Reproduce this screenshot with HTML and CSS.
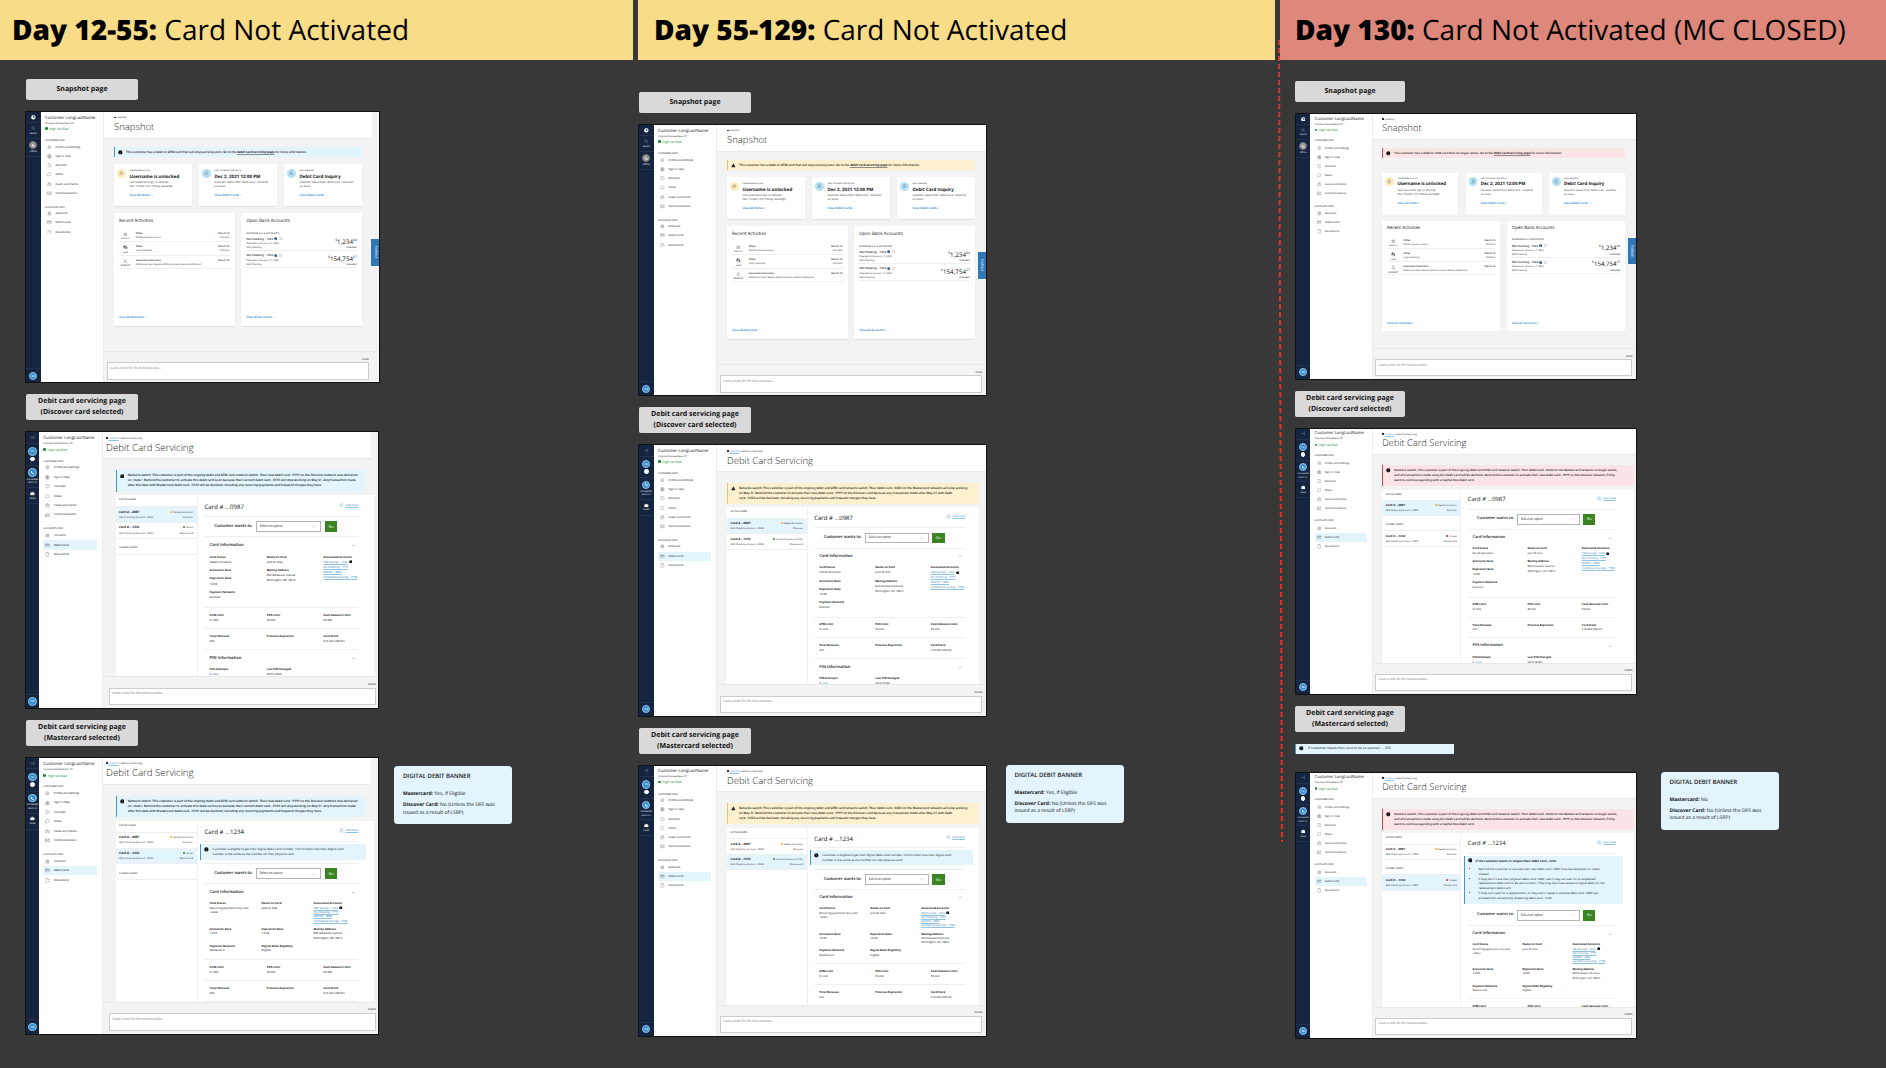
FILE: index.html
```html
<!DOCTYPE html>
<html lang="en">
<head>
    <meta charset="UTF-8">
    <meta name="viewport" content="width=device-width, initial-scale=1.0">
    <title>Card Not Activated</title>
    <link rel="stylesheet" href="styles.css">
</head>
<body>

    <!-- Icons shared by all the screens -->
    <svg class="sprite" aria-hidden="true">
        <symbol id="logo" viewBox="0 0 20 20"><circle cx="10" cy="10" r="9" fill="#fff"/><path d="M10 4l6 3-3 7-3-4-4-1z" fill="#15243f"/></symbol>
        <symbol id="search" viewBox="0 0 20 20"><circle cx="8" cy="8" r="5"/><path d="M12 12l6 6"/></symbol>
        <symbol id="collapse" viewBox="0 0 20 20"><path d="M2 10h9M8 7l3 3-3 3M13 4h4v12h-4"/></symbol>
        <symbol id="phone" viewBox="0 0 20 20"><path d="M6 4l3 3-1 2 3 3 2-1 3 3-2 2C9 16 4 11 4 6z" fill="#fff" stroke="none"/></symbol>
        <symbol id="case" viewBox="0 0 20 20"><path d="M2 7h16v10H2zM7 7V4h6v3" fill="#fff"/></symbol>
        <symbol id="gear" viewBox="0 0 20 20"><path d="M10 2l6 3v9l-6 4-6-4V5z"/><circle cx="10" cy="10" r="3"/></symbol>
        <symbol id="globe" viewBox="0 0 20 20"><circle cx="10" cy="10" r="8"/><path d="M2 10h16M10 2v16M4 6h12M4 14h12"/></symbol>
        <symbol id="clock" viewBox="0 0 20 20"><path d="M4 4a8 8 0 1 1-2 6M4 1v4h4M8 7l3 3v4"/></symbol>
        <symbol id="chat" viewBox="0 0 20 20"><path d="M3 17V9a7 7 0 1 1 7 7H7z"/></symbol>
        <symbol id="bag" viewBox="0 0 20 20"><path d="M3 6h14v11H3zM7 6V3h6v3M7 9v5M13 9v5"/></symbol>
        <symbol id="mail" viewBox="0 0 20 20"><path d="M2 4h16v12H2zM2 4l8 7 8-7M2 16l6-6M18 16l-6-6"/></symbol>
        <symbol id="bank" viewBox="0 0 20 20"><path d="M3 7l7-4 7 4zM5 8v8M8 8v8M12 8v8M15 8v8M2 17h16"/></symbol>
        <symbol id="card" viewBox="0 0 20 20"><path d="M2 4h16v12H2zM2 7h16M2 8h16"/></symbol>
        <symbol id="doc" viewBox="0 0 20 20"><path d="M4 2h8l4 4v12H4zM12 2v4h4"/></symbol>
        <symbol id="web" viewBox="0 0 20 20"><circle cx="10" cy="10" r="8"/><path d="M4 5l5-2 2 4-4 4-4-1zM12 9l5 1-2 6-4-2z" fill="#444"/></symbol>
        <symbol id="person" viewBox="0 0 20 20"><circle cx="10" cy="6" r="4"/><path d="M3 18c0-9 14-9 14 0z"/></symbol>
        <symbol id="lock" viewBox="0 0 20 20"><path d="M4 9h12v9H4zM6 9V6a4 4 0 0 1 8 0v3M10 12v3"/></symbol>
        <symbol id="info" viewBox="0 0 20 20"><circle cx="10" cy="10" r="9" fill="#111" stroke="none"/><path d="M10 9v6M10 5v2" stroke="#fff" stroke-width="1"/></symbol>
        <symbol id="warning" viewBox="0 0 20 20"><path d="M10 1l9 17H1z" fill="#111" stroke="none"/><path d="M10 7v5M10 14v2" stroke="#fff" stroke-width="1"/></symbol>
        <symbol id="minus" viewBox="0 0 20 20"><path d="M3 10h14"/></symbol>
    </svg>

    <main class="board">
        <section class="phase phase-early">
            <h1><b>Day 12-55:</b> Card Not Activated</h1>
            <div class="flow">
                <h2 class="label">Snapshot page</h2>
                <div class="row"><div class="screen" data-page="snapshot" data-level="info"></div></div>
                <h2 class="label">Debit card servicing page<br>(Discover card selected)</h2>
                <div class="row"><div class="screen shifted" data-page="discover" data-level="info"></div></div>
                <h2 class="label">Debit card servicing page<br>(Mastercard selected)</h2>
                <div class="row">
                    <div class="screen shifted" data-page="mastercard" data-level="info"></div>
                    <aside class="note">
                        <h3>DIGITAL DEBIT BANNER</h3>
                        <p><b>Mastercard:</b> Yes, if Eligible</p>
                        <p><b>Discover Card:</b> No (Unless the DFS was issued as a result of LSRP)</p>
                    </aside>
                </div>
            </div>
        </section>

        <section class="phase phase-middle">
            <h1><b>Day 55-129:</b> Card Not Activated</h1>
            <div class="flow">
                <h2 class="label">Snapshot page</h2>
                <div class="row"><div class="screen" data-page="snapshot" data-level="warning"></div></div>
                <h2 class="label">Debit card servicing page<br>(Discover card selected)</h2>
                <div class="row"><div class="screen" data-page="discover" data-level="warning"></div></div>
                <h2 class="label">Debit card servicing page<br>(Mastercard selected)</h2>
                <div class="row">
                    <div class="screen" data-page="mastercard" data-level="warning"></div>
                    <aside class="note">
                        <h3>DIGITAL DEBIT BANNER</h3>
                        <p><b>Mastercard:</b> Yes, if Eligible</p>
                        <p><b>Discover Card:</b> No (Unless the DFS was issued as a result of LSRP)</p>
                    </aside>
                </div>
            </div>
        </section>

        <section class="phase phase-closed">
            <svg class="cutoff" aria-hidden="true"><line x1="3" y1="0" x2="6" y2="802"/></svg>
            <h1><b>Day 130:</b> Card Not Activated (MC CLOSED)</h1>
            <div class="flow">
                <h2 class="label">Snapshot page</h2>
                <div class="row"><div class="screen" data-page="snapshot" data-level="error"></div></div>
                <h2 class="label">Debit card servicing page<br>(Discover card selected)</h2>
                <div class="row"><div class="screen" data-page="discover" data-level="error"></div></div>
                <h2 class="label">Debit card servicing page<br>(Mastercard selected)</h2>
                <p class="reopen"><svg class="icon"><use href="#info"/></svg>If customer needs their card to be re-opened .... XYZ</p>
                <div class="row">
                    <div class="screen" data-page="mastercard" data-level="error"></div>
                    <aside class="note">
                        <h3>DIGITAL DEBIT BANNER</h3>
                        <p><b>Mastercard:</b> No</p>
                        <p><b>Discover Card:</b> No (Unless the DFS was issued as a result of LSRP)</p>
                    </aside>
                </div>
            </div>
        </section>
    </main>

    <script src="script.js"></script>
</body>
</html>
```

FILE: styles.css
```css
/* Board */
* {
    box-sizing: border-box;
}

body {
    margin: 0;
    background: #383838;
    color: #111;
    font-family: "Open Sans", "Noto Sans", sans-serif;
    text-rendering: geometricPrecision;
}

h1, h2, h3, h4, h5, p, ul, dl, dd {
    margin: 0;
    padding: 0;
}

ul {
    list-style: none;
}

a {
    color: #1f7dbb;
    text-decoration-color: #8fc3e4;
}

.sprite {
    position: absolute;
    width: 0;
    height: 0;
}

.board {
    display: grid;
    grid-template-columns: 633fr 637fr 606fr;
    gap: 5px;
    min-height: 100vh;
}

.phase {
    position: relative;
    min-width: 0;
    --zoom: 0.25;
}

.phase h1 {
    height: 60px;
    padding-left: 12px;
    background: #f8dc87;
    color: #000;
    font-size: 28px;
    font-weight: 400;
    line-height: 60px;
    white-space: nowrap;
}

.phase h1 b {
    font-weight: 800;
}

.flow {
    display: flex;
    flex-direction: column;
    align-items: flex-start;
    gap: 11px;
    padding: 19px 0 0 25px;
}

.phase-middle .flow {
    padding: 32px 0 0;
}

.phase-middle h1 {
    padding-left: 16px;
}

.phase-closed {
    --zoom: 0.245;
}

.phase-closed h1 {
    padding-left: 15px;
    background: #de887b;
}

.phase-closed .flow {
    padding: 21px 0 0 15px;
}

/* Dashed line for the day Mastercard closes */
.cutoff {
    position: absolute;
    top: 40px;
    left: -4px;
    width: 8px;
    height: 802px;
}

.cutoff line {
    stroke: #e0342a;
    stroke-width: 2;
    stroke-dasharray: 5 3;
}

.label {
    display: flex;
    align-items: center;
    justify-content: center;
    width: 112px;
    min-height: 21px;
    padding: 2px 0;
    margin-left: 1px;
    border-radius: 2px;
    background: #d9d9d9;
    font-size: 7px;
    font-weight: 700;
    line-height: 11px;
    text-align: center;
}

.phase-closed .label {
    width: 110px;
    margin-left: 0;
}

.row {
    display: flex;
    align-items: flex-start;
    gap: 19px;
}

.phase-early .row {
    gap: 15px;
}

.phase-closed .row {
    gap: 24px;
}

.note {
    width: 472px;
    min-height: 230px;
    padding: 28px 36px;
    border-radius: 14px;
    background: #e3f4fd;
    font-size: 20px;
    line-height: 31px;
    zoom: 0.25;
}

.phase-early .note {
    margin-top: 36px;
}

.note h3 {
    margin-bottom: 41px;
    font-size: 24px;
    font-weight: 600;
}

.note p + p {
    margin-top: 13px;
}

.reopen {
    display: flex;
    align-items: center;
    gap: 16px;
    width: 648px;
    height: 42px;
    margin: 4px 0 28px;
    padding-left: 14px;
    border-left: 5px solid #4796c9;
    background: #e3f4fd;
    font-size: 14px;
    zoom: var(--zoom);
}

/* Screens are drawn at full size and zoomed out */
.screen {
    position: relative;
    display: flex;
    width: 1394px;
    height: 1089px;
    border: 4px solid #111;
    overflow: hidden;
    background: #f3f3f3;
    color: #111;
    font-size: 11px;
    line-height: 20px;
    zoom: var(--zoom);
}

.phase-early .screen {
    width: 1420px;
}

.phase-early .screen.shifted {
    width: 1388px;
    zoom: 0.255;
}

.icon {
    flex: none;
    width: 19px;
    height: 19px;
    fill: none;
    stroke: #333;
    stroke-width: 1px;
}

/* Left rail */
.rail {
    flex: none;
    display: flex;
    flex-direction: column;
    width: 58px;
    background: #15243f;
    color: #fff;
    font-size: 9px;
    line-height: 14px;
    text-align: center;
}

.rail div {
    display: flex;
    flex-direction: column;
    align-items: center;
    justify-content: center;
    gap: 4px;
    border-bottom: 2px solid #23324f;
}

.rail .icon {
    stroke: #fff;
}

.rail .h1 { height: 45px; }
.rail .h2 { height: 62px; }
.rail .h3 { height: 73px; }
.rail .h4 { height: 87px; }

.rail .me {
    height: 56px;
    margin-top: auto;
    border-top: 2px solid #23324f;
    border-bottom: 0;
}

.disc {
    width: 33px;
    height: 33px;
    border: 2px solid #8cc4ea;
    border-radius: 50%;
    background: #3a8fd0;
    font-size: 11px;
    line-height: 29px;
}

.disc .icon {
    vertical-align: middle;
}

.disc.small {
    width: 18px;
    height: 18px;
    border-color: #fff;
    background: #fff;
}

.disc.off {
    border-color: #777;
    background: #999;
}

.shifted .rail {
    width: 51px;
}

/* Customer menu */
.side {
    flex: none;
    width: 255px;
    padding: 11px 18px;
    border-right: 2px solid #ececec;
    background: #fff;
}

.shifted .side {
    width: 250px;
    padding: 11px 17px;
}

.side h3 {
    font-size: 17px;
    font-weight: 400;
    line-height: 24px;
    white-space: nowrap;
}

.side small {
    display: block;
    font-size: 10px;
    line-height: 16px;
}

.verified {
    margin: 7px 0 26px;
    color: #1c8a3c;
    font-size: 13px;
    line-height: 20px;
}

.verified::before {
    content: "";
    display: inline-block;
    width: 10px;
    height: 10px;
    margin-right: 6px;
    border-radius: 50%;
    background: #1c8a3c;
}

.side h4 {
    margin-bottom: 2px;
    font-size: 10px;
    font-weight: 400;
    line-height: 16px;
}

.side ul {
    margin-bottom: 26px;
}

.side li {
    height: 37px;
}

.side li a {
    display: flex;
    align-items: center;
    gap: 15px;
    width: 212px;
    height: 36px;
    padding-left: 8px;
    color: #111;
    text-decoration: none;
}

.side .current {
    background: #e3f4fd;
}

/* Main area */
.main {
    flex: 1;
    display: flex;
    flex-direction: column;
    min-width: 0;
}

.top {
    flex: none;
    height: 106px;
    padding: 17px 0 0 39px;
    border-bottom: 2px solid #e9e9e9;
    background: #fff;
}

.phase-early .top {
    margin-right: 28px;
}

.shifted .top {
    padding-left: 13px;
}

.crumbs {
    font-size: 9px;
    line-height: 16px;
}

.crumbs::before {
    content: "";
    display: inline-block;
    width: 6px;
    height: 7px;
    margin-right: 4px;
    background: #333;
}

.top h3 {
    color: #222;
    font-size: 38px;
    font-weight: 300;
    line-height: 52px;
}

.content {
    flex: 1;
    min-height: 0;
    overflow: hidden;
    padding: 34px 43px 0 39px;
}

.phase-early .content {
    padding-right: 69px;
}

.alert {
    display: flex;
    gap: 13px;
    padding: 10px 12px;
    border-left: 5px solid #4796c9;
    background: #e3f4fd;
    font-size: 12px;
    font-weight: 600;
    white-space: nowrap;
}

.alert .icon {
    margin-top: 1px;
}

.alert a {
    color: inherit;
    font-weight: 700;
    text-decoration-color: #8a8a8a;
}

.alert.warning {
    border-color: #f4c444;
    background: #fdf0cf;
}

.alert.error {
    border-color: #d6454e;
    background: #fbe4e5;
}

.tiles {
    display: grid;
    grid-template-columns: 1fr 1fr 1fr;
    gap: 29px;
    margin: 28px 0;
}

.phase-closed .tiles {
    margin-top: 59px;
}

.tile {
    display: flex;
    gap: 13px;
    height: 168px;
    padding: 18px 13px;
    background: #fff;
    box-shadow: 0 2px 4px #ddd;
    white-space: nowrap;
}

.badge {
    flex: none;
    display: flex;
    align-items: center;
    justify-content: center;
    width: 36px;
    height: 36px;
    border-radius: 50%;
    background: #b5dff2;
}

.badge.yellow {
    background: #fcebbd;
}

.tile small {
    display: block;
    font-size: 9px;
    line-height: 16px;
}

.tile h4 {
    margin-top: 4px;
    font-size: 18px;
    font-weight: 700;
    line-height: 24px;
}

.tile p {
    color: #333;
    line-height: 19px;
}

.more {
    font-size: 12px;
    font-weight: 600;
    text-decoration: none;
}

.tile .more {
    display: block;
    margin-top: 16px;
}

.panels {
    display: grid;
    grid-template-columns: 1fr 1fr;
    gap: 27px;
}

.panel {
    display: flex;
    flex-direction: column;
    height: 451px;
    padding: 20px 20px 22px;
    background: #fff;
    box-shadow: 0 2px 4px #ddd;
}

.panel h4 {
    margin-bottom: 14px;
    font-size: 18px;
    font-weight: 400;
    line-height: 28px;
}

.panel .more {
    margin-top: auto;
}

.activity {
    display: flex;
    height: 54px;
    padding-top: 8px;
    border-bottom: 2px solid #efefef;
    color: #333;
    font-size: 10px;
    line-height: 17px;
}

.activity b, .account b {
    color: #111;
    font-weight: 600;
}

.activity .kind {
    width: 52px;
    margin-right: 15px;
    text-align: center;
}

.kind .icon {
    display: block;
    margin: 4px auto 0;
}

.activity .when, .account .sum {
    margin-left: auto;
    text-align: right;
}

.shown {
    margin-top: 8px;
    font-size: 10px;
    line-height: 16px;
}

.account {
    display: flex;
    height: 66px;
    padding-top: 9px;
    border-bottom: 2px solid #efefef;
    color: #333;
    font-size: 10px;
    line-height: 17px;
}

.account b {
    font-size: 11px;
}

.account .icon {
    width: 14px;
    height: 14px;
    margin-left: 5px;
    vertical-align: middle;
}

.account .icon:first-of-type {
    stroke: #1c3f77;
    fill: #7d94b8;
}

.sum strong {
    display: block;
    margin-top: 6px;
    color: #111;
    font-size: 25px;
    font-weight: 400;
    line-height: 28px;
}

.account .sum b {
    font-size: 8px;
}

.sum sup {
    font-size: 13px;
    line-height: 0;
}

.feedback {
    position: absolute;
    top: 508px;
    right: 0;
    width: 32px;
    height: 106px;
    padding: 0;
    border: 0;
    background: #2f78b5;
    color: #fff;
    font: inherit;
    writing-mode: vertical-rl;
}

/* Servicing page */
.servicing {
    display: flex;
    flex-direction: column;
    padding: 43px 28px 0 39px;
}

.phase-early .servicing {
    padding: 43px 15px 0 50px;
}

.phase-closed .servicing {
    padding: 43px 8px 0 39px;
}

.servicing > .alert {
    flex: none;
    margin-bottom: 15px;
    padding: 12px;
}

.phase-early .servicing > .alert {
    margin-right: 30px;
}

.cards {
    flex: 1;
    display: flex;
    min-height: 0;
    overflow: hidden;
    background: #fff;
}

.list {
    flex: none;
    width: 322px;
    border-right: 2px solid #f1f1f1;
    font-size: 10px;
}

.list h4 {
    padding: 8px 14px 14px;
    border-bottom: 3px solid #efefef;
    font-size: 10px;
    font-weight: 400;
    line-height: 20px;
}

.list .item + h4 {
    padding-top: 25px;
}

.item {
    display: flex;
    justify-content: space-between;
    height: 62px;
    padding: 10px 14px;
    border-bottom: 2px solid #efefef;
    color: #333;
}

.item.on {
    background: #e3f4fd;
}

.item b {
    color: #111;
    font-size: 12px;
}

.item .state {
    text-align: right;
}

.dot {
    display: inline-block;
    width: 8px;
    height: 8px;
    margin-right: 3px;
    border-radius: 50%;
    background: #f4b81c;
}

.dot.green { background: #2d8a1f; }
.dot.red { background: #d6252e; }

.detail {
    width: 630px;
    padding: 28px 0 0 27px;
}

.detail header {
    display: flex;
    justify-content: space-between;
    height: 55px;
    border-bottom: 2px solid #efefef;
    line-height: 32px;
}

.detail header h4 {
    font-size: 24px;
    font-weight: 400;
}

.detail header a {
    display: flex;
    gap: 5px;
    line-height: 18px;
}

.detail header .icon {
    stroke: #1f7dbb;
}

.detail .alert {
    width: 650px;
    margin: 8px 0 10px -16px;
    font-weight: 500;
}

.banner .alert {
    margin-bottom: 15px;
}

.detail .alert h5 {
    margin: 2px 0 13px;
    font-size: 12px;
    line-height: 20px;
}

.detail .alert li {
    margin-left: 12px;
    list-style: disc;
}

.action {
    display: flex;
    align-items: center;
    height: 82px;
    padding-left: 38px;
    border-bottom: 2px solid #efefef;
}

.banner .action {
    border-top: 2px solid #efefef;
}

.action label {
    width: 163px;
    font-size: 16px;
    font-weight: 600;
}

.action select {
    width: 256px;
    height: 42px;
    padding: 0 12px;
    border: 2px solid #b5b5b5;
    border-radius: 0;
    background: #fff url('data:image/svg+xml,<svg xmlns="http://www.w3.org/2000/svg" viewBox="0 0 16 10"><path d="M1 1l7 7 7-7" fill="none" stroke="%23777"/></svg>') no-repeat right 14px center / 16px 10px;
    color: #111;
    font: inherit;
    font-size: 12px;
    appearance: none;
}

.action button {
    width: 50px;
    height: 42px;
    margin-left: 14px;
    border: 0;
    background: #3a8422;
    color: #fff;
    font: inherit;
    font-size: 15px;
}

.detail h4.title {
    display: flex;
    justify-content: space-between;
    margin: 23px 10px 24px 20px;
    font-size: 16px;
    font-weight: 600;
    line-height: 20px;
}

.fields {
    display: grid;
    grid-template-columns: 224px 222px 1fr;
    padding-left: 20px;
    border-bottom: 2px solid #efefef;
    white-space: nowrap;
}

.fields.info {
    padding-bottom: 26px;
}

.fields.info > div {
    display: flex;
    flex-direction: column;
    gap: 13px;
}

.fields.limits {
    padding-top: 19px;
    padding-bottom: 20px;
}

.fields.tight {
    grid-template-columns: 204px 204px 1fr;
    gap: 16px 0;
    padding-bottom: 25px;
    line-height: 17px;
}

.fields dt {
    font-weight: 700;
}

.fields .icon {
    width: 14px;
    height: 14px;
    margin: -6px 0 -4px 6px;
    vertical-align: middle;
}

/* Note box */
.bottom {
    flex: none;
    height: 125px;
    padding: 18px 13px 8px 10px;
    border-top: 2px solid #e9e9e9;
    background: #f3f3f3;
    text-align: right;
}

.phase-early .bottom {
    padding-right: 41px;
}

.phase-early .shifted .bottom {
    padding-left: 23px;
    padding-right: 8px;
}

.bottom label {
    display: block;
    font-size: 10px;
    line-height: 18px;
}

.bottom textarea {
    display: block;
    width: 100%;
    height: 70px;
    margin-top: 5px;
    padding: 10px;
    border: 3px solid #ccc;
    background: #fff;
    font: inherit;
    font-size: 12px;
    resize: none;
}
```

FILE: script.js
```js
// Text of the alert for each level
var snapshotAlerts = {
    info: "This customer has a debit or ATM card that will stop working soon.",
    warning: "This customer has a debit or ATM card that will stop working soon.",
    error: "This customer has a debit or ATM card that no longer works."
};

var servicingAlerts = {
    info: "Network switch: This customer is part of the ongoing debit and ATM card network switch. Their new debit card...YYYY on the Discover network was delivered<br>on &lt;date&gt;. Remind the customer to activate this debit card soon because their current debit card...XXXX will stop working on May 31. Any transaction made<br>after this date with Mastercard debit card...XXXX will be declined, including any recurring payments and frequent charges they have.",
    warning: "Network switch: This customer is part of the ongoing debit and ATM card network switch. Their debit card...XXXX on the Mastercard network will stop working<br>on May 31. Remind the customer to activate their new debit card...YYYY on the Discover card because any transaction made after May 31 with debit<br>card...XXXX will be declined, including any recurring payments and frequent charges they have.",
    error: "Network switch: This customer is part of the ongoing debit and ATM card network switch. Their debit card...XXXX on the Mastercard network no longer works,<br>and all transactions made using this debit card will be declined. Remind the customer to activate their new debit card...YYYY on the Discover network if they<br>want to continue spending with a Capital One debit card."
};

function icon(name) {
    return '<svg class="icon" aria-hidden="true"><use href="#' + name + '"/></svg>';
}

function alertBox(level, text) {
    return '<div class="alert ' + level + '">' + icon(level == "warning" ? "warning" : "info") + "<div>" + text + "</div></div>";
}

function rail(page) {
    var me = '<div class="me"><span class="disc">AB</span></div>';
    if (page == "snapshot") {
        return '<div class="rail"><div class="h1">' + icon("logo") + '</div><div class="h2">' + icon("search") + 'Search</div>' +
            '<div class="h3"><span class="disc off">' + icon("phone") + '</span>Offline</div>' + me + '</div>';
    }
    return '<div class="rail"><div class="h1">' + icon("collapse") + '</div>' +
        '<div class="h4"><span class="disc">CL</span><span class="disc small"></span></div>' +
        '<div class="h4"><span class="disc">' + icon("phone") + '</span><span>Connected<br>00:01:21</span></div>' +
        '<div class="h2">' + icon("case") + 'Cases</div>' + me + '</div>';
}

function menu(items, current) {
    return "<ul>" + items.map(function (item) {
        return '<li><a href="#"' + (item[1] == current ? ' class="current"' : "") + ">" + icon(item[0]) + item[1] + "</a></li>";
    }).join("") + "</ul>";
}

function side(page) {
    return '<nav class="side"><h3>Customer LongLastName</h3><small>Citytown Somewhere, ST</small><p class="verified">High Verified</p>' +
        "<h4>CUSTOMER INFO</h4>" +
        menu([["gear", "Profile and Settings"], ["globe", "Sign In Help"], ["clock", "Activities"], ["chat", "Notes"], ["bag", "Cases and Claims"], ["mail", "Communications"]]) +
        "<h4>ACCOUNTS INFO</h4>" +
        menu([["bank", "Accounts"], ["card", "Debit Cards"], ["doc", "Documents"]], page == "snapshot" ? "" : "Debit Cards") +
        "</nav>";
}

function tile(color, iconName, label, title, text, link) {
    return '<div class="tile"><span class="badge ' + color + '">' + icon(iconName) + "</span><div><small>" + label + "</small><h4>" + title +
        "</h4><p>" + text + '</p><a class="more" href="#">' + link + " &nbsp;›</a></div></div>";
}

function activity(iconName, kind, title, text, when) {
    return '<div class="activity"><div class="kind">' + icon(iconName) + kind + "</div><div><b>" + title + "</b><br>" + text +
        '</div><div class="when"><b>March 15</b><br>' + when + "</div></div>";
}

function account(number, dollars, cents) {
    return '<div class="account"><div><b>360 Checking ...' + number + "</b>" + icon("web") + icon("clock") +
        '<br>Opened on January 14, 2021<br>360 Checking</div><div class="sum"><strong><sup>$</sup>' + dollars + "<sup>" + cents + "</sup></strong><b>AVAILABLE</b></div></div>";
}

function snapshot(level) {
    return '<div class="content">' +
        alertBox(level, snapshotAlerts[level] + ' Go to the <a href="#">debit card servicing page</a> for more information.') +
        '<div class="tiles">' +
        tile("yellow", "lock", "USERNAME STATUS", "Username is unlocked", "Last successful sign in attempt<br>Nov 15 2021 4:31 PM by abcdefgh", "View All Notes") +
        tile("", "person", "LAST INTERACTION NOTE", "Dec 2, 2021 12:00 PM", "Question about their debit card - could be<br>an issue.", "View Debit Cards") +
        tile("", "person", "CALL REASON", "Debit Card Inquiry", "Question about their debit card - could be<br>an issue.", "View Debit Cards") +
        '</div><div class="panels"><div class="panel"><h4>Recent Activities</h4>' +
        activity("bank", "bank in", "Other", "Modify postal contact", "12:34pm") +
        activity("web", "web", "Other", "Login Attempt", "12:34pm") +
        activity("person", "EASE327", "Associate Interaction", "Additional item details Additional item details Additional", "") +
        '<a class="more" href="#">View All Activities &nbsp;›</a></div>' +
        '<div class="panel"><h4>Open Bank Accounts</h4><p class="shown">SHOWING 2 of 2 ACCOUNTS</p>' +
        account("1234", "1,234", "04") + account("1234", "154,754", "27") +
        '<a class="more" href="#">View All Accounts &nbsp;›</a></div></div></div>';
}

function item(number, color, state, network, on) {
    return '<div class="item' + (on ? " on" : "") + '"><div><b>Card # ...' + number + '</b><br>360 Checking Account...0000</div><div class="state"><span class="dot ' +
        color + '"></span>' + state + "<br>" + network + "</div></div>";
}

function cardList(level, mastercard) {
    var html = '<div class="list"><h4>ACTIVE CARDS</h4>' + item("0987", "", "Needs Activation", "Discover", !mastercard);
    if (level == "error") {
        return html + "<h4>CLOSED CARDS</h4>" + item("1234", "red", "Closed", "Mastercard", mastercard) + "</div>";
    }
    html += item("1234", "green", level == "warning" ? "Active (Closing on 5/31)" : "Active", "Mastercard", mastercard);
    return html + (level == "info" ? "<h4>CLOSED CARDS</h4>" : "") + "</div>";
}

function field(name, value) {
    return "<dl><dt>" + name + "</dt><dd>" + value + "</dd></dl>";
}

function detail(level, mastercard, id) {
    var accounts = field("Associated Accounts", '<a href="#">360 Savings...1234</a>' + icon("info") +
        '<br><a href="#">My Checking...7777</a><br><a href="#">MONEY...0890</a><br><a href="#">Confidence Savings...7798</a>');
    var address = field("Mailing Address", "802 Delaware Avenue,<br>Wilmington, DE 19810");
    var html = '<div class="detail' + (mastercard && level != "error" ? " banner" : "") + '"><header><h4>Card # ...' +
        (mastercard ? "1234" : "0987") + '</h4><a href="#">' + icon("lock") + "Lock Card</a></header>";

    if (mastercard && level == "error") {
        html += alertBox("info", "<h5>If the customer wants to reopen their debit card...1234:</h5><ul>" +
            "<li>Remind the customer to activate their new debit card...0987 that was delivered on &lt;date&gt;<br>instead.</li>" +
            "<li>If they don't have their physical debit card...0987, ask if they can wait for an expedited<br>replacement debit card to be sent to them. They may also have access to digital debit for the<br>replacement debit card.</li>" +
            "<li>If they can't wait for a replacement, or they aren't ready to activate debit card...0987 yet,<br>proceed with temporarily reopening debit card...1234.</li></ul>");
    } else if (mastercard) {
        html += alertBox("info", "Customer is eligible to get their digital debit card number. Inform them that their digital card<br>number is the same as the number on their physical card.");
    }

    html += '<div class="action"><label for="want' + id + '">Customer wants to:</label><select id="want' + id +
        '"><option>Select an option</option></select><button type="button">Go</button></div>' +
        '<h4 class="title">Card Information ' + icon("minus") + "</h4>";

    if (mastercard) {
        html += '<div class="fields info tight">' + field("Card Status", "Recurring payments only until<br>&lt;date&gt;") + field("Name on Card", "Jane M. Doe") + accounts +
            field("Activation Date", "12/25") + field("Expiration Date", "12/28") + address +
            field("Payment Network", "Mastercard") + field("Digital Debit Eligibility", "Eligible") + "</div>";
    } else {
        html += '<div class="fields info"><div>' + field("Card Status", "Needs Activation") + field("Activation Date", "") + field("Expiration Date", "12/28") +
            field("Payment Network", "Discover") + "</div><div>" + field("Name on Card", "Jane M. Doe") + address + "</div><div>" + accounts + "</div></div>";
    }

    html += '<div class="fields limits">' + field("ATM Limit", "$1,000") + field("POS Limit", "$5,000") + field("Cash Advance Limit", "$5,000") + "</div>" +
        '<div class="fields limits">' + field("Total Reissues", "000") + field("Previous Expiration", "") + field("Card Stock", "016-292 (360 DI)") + "</div>";
    if (!mastercard) {
        html += '<h4 class="title">PIN Information ' + icon("minus") + '</h4><div class="fields">' +
            field("PIN Attempts", '0 &nbsp;<a href="#">clear</a>') + field("Last PIN Changed", "02/01/2024") + "</div>";
    }
    return html + "</div>";
}

// Build every screen on the board
document.querySelectorAll(".screen").forEach(function (screen, id) {
    var page = screen.dataset.page;
    var level = screen.dataset.level;
    var isSnapshot = page == "snapshot";
    var mastercard = page == "mastercard";

    screen.innerHTML = rail(page) + side(page) + '<div class="main"><div class="top"><p class="crumbs">' +
        (isSnapshot ? "Snapshot" : '<a href="#">Snapshot</a> / Debit Card Servicing') + "</p><h3>" + (isSnapshot ? "Snapshot" : "Debit Card Servicing") + "</h3></div>" +
        (isSnapshot ? snapshot(level) : '<div class="content servicing">' + alertBox(level, servicingAlerts[level]) +
            '<div class="cards">' + cardList(level, mastercard) + detail(level, mastercard, id) + "</div></div>") +
        '<div class="bottom"><label for="note' + id + '">0/' + (isSnapshot ? "250" : "2000") + '</label><textarea id="note' + id +
        '" placeholder="Leave a note for the next associate..."></textarea></div></div>' +
        (isSnapshot ? '<button class="feedback" type="button">Feedback</button>' : "");
});
```
